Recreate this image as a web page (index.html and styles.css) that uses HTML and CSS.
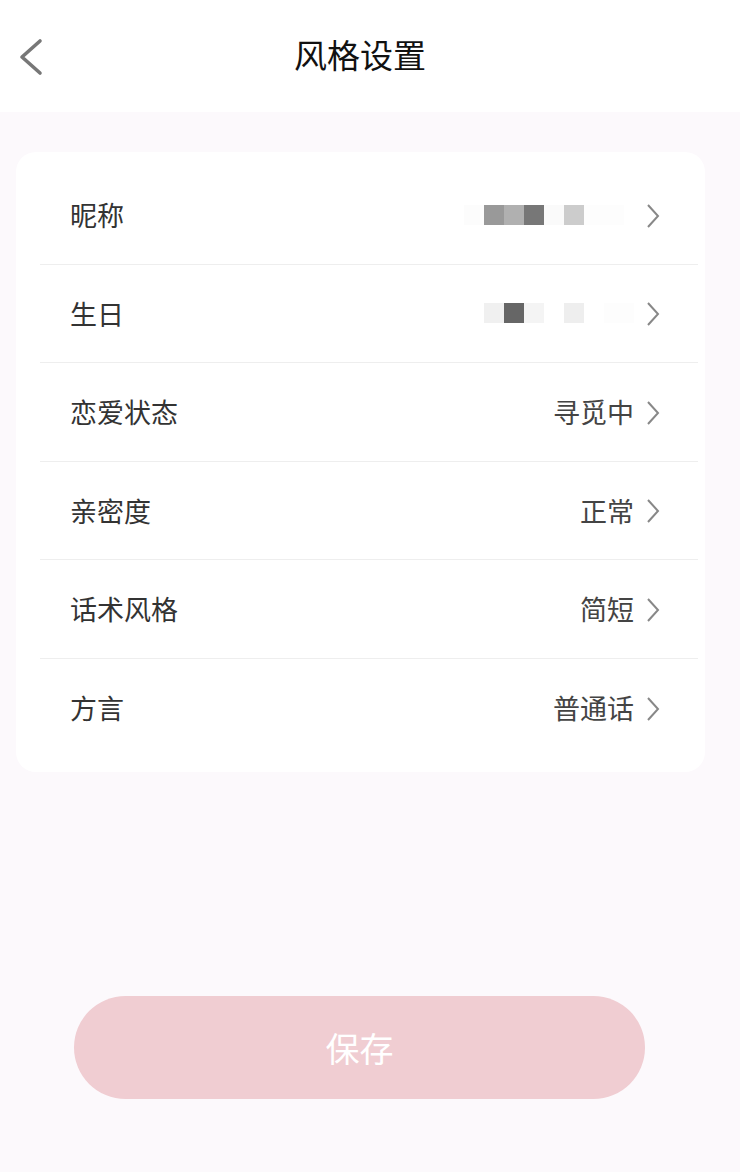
FILE: index.html
```html
<!DOCTYPE html>
<html lang="zh-CN">
<head>
    <meta charset="UTF-8">
    <meta name="viewport" content="width=device-width, initial-scale=1.0">
    <title>风格设置</title>
    <link rel="stylesheet" href="styles.css">
</head>
<body>
    <div class="header">
        <svg class="back" width="26" height="38" viewBox="0 0 26 38">
            <polyline points="22,3 4,19 22,35" fill="none" stroke="#777" stroke-width="3.6" stroke-linecap="round" stroke-linejoin="round"/>
        </svg>
        <h1>风格设置</h1>
    </div>

    <div class="main">
        <div class="card">
            <div class="row">
                <span class="label">昵称</span>
                <span class="value">
                    <span class="mosaic">
                        <i class="c-fc"></i><i class="c-99"></i><i class="c-b0"></i><i class="c-77"></i><i class="c-fa"></i><i class="c-cc"></i><i class="c-fd"></i><i class="c-fd"></i>
                    </span>
                </span>
                <svg class="arrow" width="14" height="26" viewBox="0 0 14 26"><polyline points="2,2 12,13 2,24" fill="none" stroke="#888" stroke-width="2"/></svg>
            </div>
            <div class="row">
                <span class="label">生日</span>
                <span class="value">
                    <span class="mosaic end">
                        <i class="c-f0"></i><i class="c-66"></i><i class="c-f4"></i><i class="c-ff"></i><i class="c-ee"></i><i class="c-ff"></i><i class="c-fd"></i><i class="c-fd half"></i>
                    </span>
                </span>
                <svg class="arrow" width="14" height="26" viewBox="0 0 14 26"><polyline points="2,2 12,13 2,24" fill="none" stroke="#888" stroke-width="2"/></svg>
            </div>
            <div class="row">
                <span class="label">恋爱状态</span>
                <span class="value">寻觅中</span>
                <svg class="arrow" width="14" height="26" viewBox="0 0 14 26"><polyline points="2,2 12,13 2,24" fill="none" stroke="#888" stroke-width="2"/></svg>
            </div>
            <div class="row">
                <span class="label">亲密度</span>
                <span class="value">正常</span>
                <svg class="arrow" width="14" height="26" viewBox="0 0 14 26"><polyline points="2,2 12,13 2,24" fill="none" stroke="#888" stroke-width="2"/></svg>
            </div>
            <div class="row">
                <span class="label">话术风格</span>
                <span class="value">简短</span>
                <svg class="arrow" width="14" height="26" viewBox="0 0 14 26"><polyline points="2,2 12,13 2,24" fill="none" stroke="#888" stroke-width="2"/></svg>
            </div>
            <div class="row">
                <span class="label">方言</span>
                <span class="value">普通话</span>
                <svg class="arrow" width="14" height="26" viewBox="0 0 14 26"><polyline points="2,2 12,13 2,24" fill="none" stroke="#888" stroke-width="2"/></svg>
            </div>
        </div>

        <button class="save">保存</button>
    </div>
</body>
</html>
```

FILE: styles.css
```css
body {
    margin: 0;
    height: 1172px;
    font-family: "Noto Sans CJK SC", "Noto Sans", sans-serif;
    background-color: #fcf9fc;
    color: #333;
}
.header {
    height: 112px;
    background: #fff;
    display: flex;
    align-items: center;
    justify-content: center;
    position: relative;
}
.header h1 {
    margin: -4px 0 0 -20px;
    font-size: 33px;
    font-weight: 400;
    color: #111;
    line-height: 1;
}
.back {
    position: absolute;
    left: 18px;
    top: 38px;
}
.main {
    padding-top: 40px;
}
.card {
    margin-left: 16px;
    width: 689px;
    background: #fff;
    border-radius: 20px;
    padding: 14px 0 15px;
}
.row {
    height: 98.5px;
    margin-left: 24px;
    margin-right: 7px;
    padding-left: 30px;
    padding-right: 38px;
    display: flex;
    align-items: center;
    border-bottom: 1.5px solid #eeeeee;
    box-sizing: border-box;
}
.row:last-child {
    border-bottom: none;
}
.label {
    flex: 1;
    font-size: 27px;
    color: #333;
}
.value {
    font-size: 27px;
    color: #444;
    margin-right: 12px;
    display: flex;
    align-items: center;
}
.arrow {
    margin-top: 2px;
}
.mosaic {
    display: flex;
    margin-right: 10px;
}
.mosaic.end {
    margin-right: 0;
}
.mosaic i {
    display: block;
    width: 20px;
    height: 20px;
}
.mosaic i.half { width: 10px; }
.c-fc { background: #fcfcfc; }
.c-fd { background: #fdfdfd; }
.c-fa { background: #fafafa; }
.c-ff { background: #fff; }
.c-99 { background: #999; }
.c-b0 { background: #b0b0b0; }
.c-77 { background: #777; }
.c-cc { background: #ccc; }
.c-f0 { background: #f0f0f0; }
.c-66 { background: #666; }
.c-f4 { background: #f4f4f4; }
.c-ee { background: #eee; }
.save {
    display: block;
    margin: 224px 0 0 74px;
    width: 571px;
    height: 103px;
    border: none;
    border-radius: 52px;
    background: #f0cdd2;
    color: #fff;
    font-family: inherit;
    font-size: 34px;
    padding: 0;
}
```
